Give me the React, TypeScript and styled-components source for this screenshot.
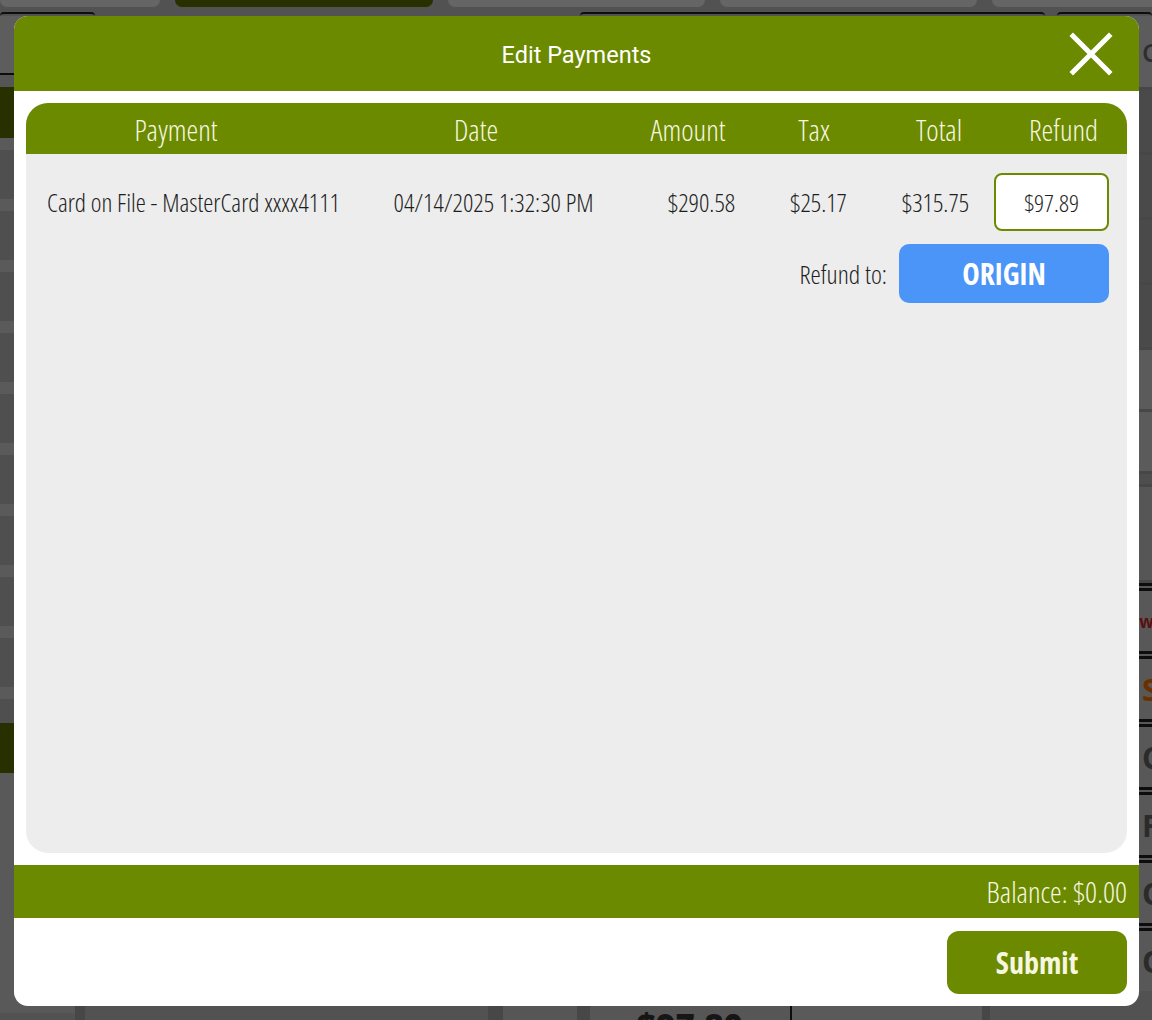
import React from 'react';
import styled, { createGlobalStyle, css } from 'styled-components';

const GREEN = '#6b8a00';
const CREAM = '#f7f7e0';
const BLUE = '#4b95f8';

const GlobalStyle = createGlobalStyle`
  html, body {
    margin: 0;
    padding: 0;
  }
  body {
    width: 1152px;
    height: 1020px;
    overflow: hidden;
    background: #525252;
    font-family: 'Open Sans', 'Liberation Sans', sans-serif;
  }
  * {
    box-sizing: border-box;
  }
`;

const condensed = css`
  font-family: 'Open Sans', 'Liberation Sans Narrow', 'DejaVu Sans Condensed', sans-serif;
  font-stretch: 75%;
`;

/* ---------- dimmed POS screen behind the dialog ---------- */

const Screen = styled.div`
  position: relative;
  width: 1152px;
  height: 1020px;
  overflow: hidden;
  background: #525252;
`;

const Backdrop = styled.div`
  height: 100%;
  display: flex;
  flex-direction: column;
`;

const TabStrip = styled.div`
  height: 7px;
  flex: 0 0 auto;
  display: flex;
  gap: 15px;
`;

const Tab = styled.div<{ $w: number; $active?: boolean }>`
  width: ${(p) => p.$w}px;
  flex: 0 0 auto;
  background: ${(p) => (p.$active ? '#283000' : '#656565')};
  border-radius: 0 0 9px 9px;
`;

const BoxTops = styled.div`
  height: 4px;
  flex: 0 0 auto;
  margin-top: 5px;
  display: flex;
`;

const BoxTop = styled.div<{ $w: number; $gap?: number }>`
  width: ${(p) => p.$w}px;
  margin-left: ${(p) => p.$gap || 0}px;
  border-top: 2px solid #0d0d0d;
  border-radius: 10px 10px 0 0;
`;

const Workspace = styled.div`
  flex: 1;
  display: flex;
`;

const LeftRail = styled.div`
  width: 75px;
  display: flex;
  flex-direction: column;
`;

const RailBand = styled.div<{ $h: number; $c: string }>`
  height: ${(p) => p.$h}px;
  flex: 0 0 auto;
  background: ${(p) => p.$c};
`;

const Gutter = styled.div<{ $w: number; $c?: string }>`
  width: ${(p) => p.$w}px;
  flex: 0 0 auto;
  background: ${(p) => p.$c || '#474747'};
`;

const Column = styled.div<{ $w?: number; $c?: string }>`
  ${(p) => (p.$w ? `width: ${p.$w}px; flex: 0 0 auto;` : 'flex: 1;')}
  background: ${(p) => p.$c || '#525252'};
  display: flex;
  flex-direction: column;
  justify-content: flex-end;
  align-items: center;
`;

const BigTotal = styled.div`
  font-family: 'Open Sans', sans-serif;
  font-weight: 800;
  font-size: 33px;
  line-height: 1;
  color: #161616;
  margin-bottom: -22px;
`;

const OrderLabel = styled.div`
  font-family: 'Open Sans', sans-serif;
  font-weight: 700;
  font-size: 24px;
  color: #4a1208;
  margin-bottom: 8px;
`;

const Divider = styled.div`
  width: 2px;
  background: #0d0d0d;
`;

const RightRail = styled.div`
  width: 162px;
  display: flex;
  flex-direction: column;
`;

const RightBand = styled.div<{ $h: number; $c: string }>`
  height: ${(p) => p.$h}px;
  flex: 0 0 auto;
  background: ${(p) => p.$c};
  border-bottom: 3px solid #474747;
  padding-left: 152px;
  display: flex;
  align-items: center;
  font-family: 'Open Sans', sans-serif;
  font-weight: 600;
  font-size: 26px;
  color: #2e2e2e;
  white-space: nowrap;
  overflow: hidden;
`;

const RailKey = styled.div<{ $color?: string; $size?: number; $indent?: number }>`
  height: 68px;
  flex: 0 0 auto;
  border-top: 8px double #0d0d0d;
  padding-left: ${(p) => p.$indent ?? 152}px;
  display: flex;
  align-items: center;
  font-family: 'Open Sans', sans-serif;
  font-weight: 700;
  font-size: ${(p) => p.$size || 30}px;
  color: ${(p) => p.$color || '#2b2b2b'};
  white-space: nowrap;
  overflow: hidden;
  background: #585858;
`;

/* ---------- Edit Payments dialog ---------- */

const Modal = styled.div`
  position: absolute;
  left: 14px;
  top: 16px;
  width: 1125px;
  height: 990px;
  background: #ffffff;
  border-radius: 14px;
  overflow: hidden;
  display: flex;
  flex-direction: column;
`;

const ModalHeader = styled.header`
  height: 75px;
  flex: 0 0 auto;
  background: ${GREEN};
  display: grid;
  grid-template-columns: 1fr auto 1fr;
  align-items: center;
`;

const Title = styled.h1`
  grid-column: 2;
  margin: 3px 0 0;
  font-family: Roboto, 'Noto Sans', sans-serif;
  font-weight: 400;
  font-size: 23.5px;
  color: #ffffff;
`;

const CloseButton = styled.button`
  grid-column: 3;
  justify-self: end;
  width: 44px;
  height: 44px;
  margin-right: 26px;
  padding: 0;
  border: 0;
  background: transparent;
  display: flex;
  align-items: center;
  justify-content: center;
  cursor: pointer;
`;

const ModalBody = styled.div`
  flex: 1;
  padding: 12px;
  display: flex;
`;

const Card = styled.section`
  flex: 1;
  background: #ededed;
  border-radius: 22px;
  overflow: hidden;
  display: flex;
  flex-direction: column;
`;

const TableHead = styled.div`
  height: 51px;
  flex: 0 0 auto;
  background: ${GREEN};
  display: grid;
  grid-template-columns: 300px 300px 124px 128px 122px 1fr;
  align-items: center;
`;

const HeadCell = styled.div`
  ${condensed};
  font-weight: 300;
  font-size: 29.5px;
  line-height: 1.2;
  margin-top: 2px;
  color: ${CREAM};
  text-align: center;
`;

const PaymentRow = styled.div`
  margin-top: 19px;
  padding-left: 21px;
  display: grid;
  grid-template-columns: 297px 299px 117px 117px 117px 115px;
  align-items: center;
`;

const Cell = styled.div<{ $align?: 'left' | 'center' }>`
  ${condensed};
  font-weight: 300;
  font-size: 25.5px;
  color: #1e1e1e;
  text-align: ${(p) => p.$align || 'center'};
  white-space: nowrap;
`;

const RefundInput = styled.input`
  ${condensed};
  width: 115px;
  height: 58px;
  border: 2px solid ${GREEN};
  border-radius: 8px;
  background: #ffffff;
  font-weight: 300;
  font-size: 24.5px;
  color: #1e1e1e;
  text-align: center;
  outline: none;
`;

const RefundTo = styled.div`
  margin-top: 13px;
  padding-right: 18px;
  display: flex;
  justify-content: flex-end;
  align-items: center;
  gap: 12px;
`;

const RefundLabel = styled.span`
  ${condensed};
  font-weight: 300;
  font-size: 26px;
  color: #1e1e1e;
`;

const OriginButton = styled.button`
  ${condensed};
  width: 210px;
  height: 59px;
  border: 0;
  border-radius: 10px;
  background: ${BLUE};
  color: #ffffff;
  font-weight: 700;
  font-size: 29.5px;
  cursor: pointer;
`;

const BalanceBar = styled.div`
  height: 53px;
  flex: 0 0 auto;
  background: ${GREEN};
  padding-right: 12px;
  display: flex;
  justify-content: flex-end;
  align-items: center;
`;

const Balance = styled.span`
  ${condensed};
  font-weight: 300;
  font-size: 29.5px;
  color: ${CREAM};
`;

const Actions = styled.div`
  height: 88px;
  flex: 0 0 auto;
  padding: 13px 12px 0;
  display: flex;
  justify-content: flex-end;
  align-items: flex-start;
`;

const SubmitButton = styled.button`
  ${condensed};
  width: 180px;
  height: 63px;
  border: 0;
  border-radius: 12px;
  background: ${GREEN};
  color: ${CREAM};
  font-weight: 700;
  font-size: 30px;
  cursor: pointer;
`;

const stripes = Array.from({ length: 9 });

const App: React.FC = () => {
  return (
    <>
      <GlobalStyle />
      <Screen>
        <Backdrop>
          <TabStrip>
            <Tab $w={160} />
            <Tab $w={258} $active />
            <Tab $w={257} />
            <Tab $w={257} />
            <Tab $w={175} />
          </TabStrip>
          <BoxTops>
            <BoxTop $w={95} />
            <BoxTop $w={465} $gap={485} />
            <BoxTop $w={95} $gap={12} />
          </BoxTops>
          <Workspace>
            <LeftRail>
              <RailBand $h={57} $c='#5d5d5d' />
              <RailBand $h={2} $c='#0d0d0d' />
              <RailBand $h={12} $c='#555555' />
              <RailBand $h={51} $c='#283000' />
              {stripes.map((_, i) => (
                <React.Fragment key={i}>
                  <RailBand $h={12} $c='#5a5a5a' />
                  <RailBand $h={49} $c='#4f4f4f' />
                </React.Fragment>
              ))}
              <RailBand $h={12} $c='#5a5a5a' />
              <RailBand $h={24} $c='#4f4f4f' />
              <RailBand $h={50} $c='#283000' />
              <RailBand $h={240} $c='#595959' />
            </LeftRail>
            <Gutter $w={10} />
            <Column />
            <Gutter $w={15} />
            <Column $w={74} $c='#565656' />
            <Gutter $w={13} />
            <Column $w={200} $c='#565656'>
              <BigTotal>$97.80</BigTotal>
            </Column>
            <Divider />
            <Column $w={190} $c='#5a5a5a'>
              <OrderLabel>Total Order</OrderLabel>
            </Column>
            <Gutter $w={8} />
            <RightRail>
              <RightBand $h={74} $c='#5c5c5c'>Cash</RightBand>
              <RightBand $h={65} $c='#4a4a4a' />
              <RightBand $h={65} $c='#4a4a4a' />
              <RightBand $h={65} $c='#4a4a4a' />
              <RightBand $h={65} $c='#4a4a4a' />
              <RightBand $h={62} $c='#5b5b5b' />
              <RightBand $h={62} $c='#5b5b5b' />
              <RightBand $h={13} $c='#4e4e4e' />
              <RightBand $h={96} $c='#565656' />
              <RailKey $color='#5a1010' $size={17} $indent={140}>Swipe</RailKey>
              <RailKey $color='#6b3000'>Save</RailKey>
              <RailKey>Clear</RailKey>
              <RailKey>Fire</RailKey>
              <RailKey>Order</RailKey>
              <RailKey>Open</RailKey>
            </RightRail>
          </Workspace>
        </Backdrop>

        <Modal role='dialog' aria-label='Edit Payments'>
          <ModalHeader>
            <Title>Edit Payments</Title>
            <CloseButton aria-label='Close'>
              <svg width='44' height='44' viewBox='0 0 44 44'>
                <path d='M4 4 L40 40 M40 4 L4 40' stroke='#ffffff' strokeWidth='5' strokeLinecap='square' />
              </svg>
            </CloseButton>
          </ModalHeader>

          <ModalBody>
            <Card>
              <TableHead>
                <HeadCell>Payment</HeadCell>
                <HeadCell>Date</HeadCell>
                <HeadCell>Amount</HeadCell>
                <HeadCell>Tax</HeadCell>
                <HeadCell>Total</HeadCell>
                <HeadCell>Refund</HeadCell>
              </TableHead>

              <PaymentRow>
                <Cell $align='left'>Card on File - MasterCard xxxx4111</Cell>
                <Cell>04/14/2025 1:32:30 PM</Cell>
                <Cell>$290.58</Cell>
                <Cell>$25.17</Cell>
                <Cell>$315.75</Cell>
                <RefundInput defaultValue='$97.89' />
              </PaymentRow>

              <RefundTo>
                <RefundLabel>Refund to:</RefundLabel>
                <OriginButton>ORIGIN</OriginButton>
              </RefundTo>
            </Card>
          </ModalBody>

          <BalanceBar>
            <Balance>Balance: $0.00</Balance>
          </BalanceBar>

          <Actions>
            <SubmitButton>Submit</SubmitButton>
          </Actions>
        </Modal>
      </Screen>
    </>
  );
};

export default App;
